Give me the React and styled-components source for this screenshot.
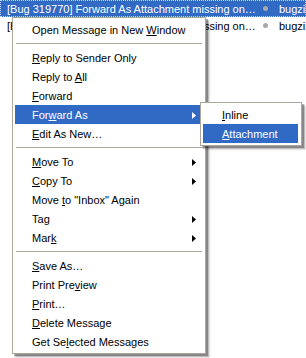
import React from 'react';
import styled, { createGlobalStyle } from 'styled-components';

const GlobalStyle = createGlobalStyle`
  html, body {
    margin: 0;
    padding: 0;
    background: #ffffff;
  }
  body {
    font-family: "Liberation Sans", Arial, sans-serif;
    font-size: 11px;
  }
`;

const threads = [
  { subject: '[Bug 319770] Forward As Attachment missing on…', sender: 'bugzil', selected: true },
  { subject: '[Bug 319770] Forward As Attachment missing on…', sender: 'bugzil', selected: false },
];

const menuGroups = [
  [{ label: 'Open Message in New Window', key: 'W' }],
  [
    { label: 'Reply to Sender Only', key: 'R' },
    { label: 'Reply to All', key: 'A' },
    { label: 'Forward', key: 'F' },
    { label: 'Forward As', key: 'w', sub: true, active: true },
    { label: 'Edit As New…', key: 'E' },
  ],
  [
    { label: 'Move To', key: 'M', sub: true },
    { label: 'Copy To', key: 'C', sub: true },
    { label: 'Move to "Inbox" Again', key: 't' },
    { label: 'Tag', key: 'g', sub: true },
    { label: 'Mark', key: 'k', sub: true },
  ],
  [
    { label: 'Save As…', key: 'S' },
    { label: 'Print Preview', key: 'v' },
    { label: 'Print…', key: 'P' },
    { label: 'Delete Message', key: 'D' },
    { label: 'Get Selected Messages', key: 'l' },
  ],
];

const forwardItems = [
  { label: 'Inline', key: 'I' },
  { label: 'Attachment', key: 'A', active: true },
];

function Label({ text, accel }) {
  const i = text.indexOf(accel);
  if (i < 0) return <span>{text}</span>;
  return (
    <span>
      {text.slice(0, i)}
      <u>{text[i]}</u>
      {text.slice(i + 1)}
    </span>
  );
}

function Arrow({ light }) {
  return (
    <svg width="4" height="7" viewBox="0 0 4 7">
      <path d="M0 0 L4 3.5 L0 7 Z" fill={light ? '#ffffff' : '#000000'} />
    </svg>
  );
}

export default function App() {
  return (
    <Page>
      <GlobalStyle />
      <ThreadList>
        {threads.map((t, i) => (
          <ThreadRow key={i} selected={t.selected}>
            <Subject>{t.subject}</Subject>
            <Dot />
            <Sender>{t.sender}</Sender>
          </ThreadRow>
        ))}
      </ThreadList>

      <Menu>
        {menuGroups.map((group, gi) => (
          <React.Fragment key={gi}>
            {gi > 0 && <Separator />}
            {group.map((item) => (
              <MenuItem key={item.label} active={item.active}>
                <Label text={item.label} accel={item.key} />
                {item.sub && <Arrow light={item.active} />}
              </MenuItem>
            ))}
          </React.Fragment>
        ))}
      </Menu>

      <SubMenu>
        {forwardItems.map((item) => (
          <MenuItem key={item.label} active={item.active}>
            <Label text={item.label} accel={item.key} />
          </MenuItem>
        ))}
      </SubMenu>
    </Page>
  );
}

const Page = styled.div`
  position: relative;
  width: 306px;
  height: 358px;
  overflow: hidden;
  background: #ffffff;
`;

const ThreadList = styled.div`
  display: flex;
  flex-direction: column;
`;

const ThreadRow = styled.div`
  display: flex;
  align-items: center;
  height: 17px;
  box-sizing: border-box;
  padding-left: 6px;
  white-space: nowrap;
  background: ${(p) => (p.selected ? '#316ac5' : '#ffffff')};
  color: ${(p) => (p.selected ? '#ffffff' : '#000000')};
  border: 1px dotted ${(p) => (p.selected ? '#c8d6ef' : 'transparent')};
  font-size: 11px;
`;

const Subject = styled.span`
  width: 256px;
  flex: none;
`;

const Dot = styled.span`
  width: 5px;
  height: 5px;
  border-radius: 50%;
  background: #a8a8a8;
  margin-right: 11px;
  flex: none;
`;

const Sender = styled.span`
  flex: none;
`;

const Menu = styled.div`
  position: absolute;
  left: 12px;
  top: 17px;
  width: 194px;
  box-sizing: border-box;
  background: #ffffff;
  border: 1px solid #aca899;
  padding: 2px 3px 2px 2px;
  box-shadow: 2px 2px 0 rgba(0, 0, 0, 0.28), 3px 3px 1px rgba(0, 0, 0, 0.18), 4px 4px 2px rgba(0, 0, 0, 0.1);
`;

const SubMenu = styled(Menu)`
  left: 200px;
  top: 102px;
  width: 102px;
`;

const MenuItem = styled.div`
  display: flex;
  align-items: center;
  justify-content: space-between;
  height: 19px;
  padding: 1px 6px 0 17px;
  box-sizing: border-box;
  white-space: nowrap;
  background: ${(p) => (p.active ? '#316ac5' : 'transparent')};
  color: ${(p) => (p.active ? '#ffffff' : '#000000')};

  ${SubMenu} & {
    padding-left: 19px;
  }

  u {
    text-decoration: underline;
    text-underline-offset: 1px;
  }
`;

const Separator = styled.div`
  height: 1px;
  margin: 4px 0 4px 1px;
  background: #aca899;
`;
